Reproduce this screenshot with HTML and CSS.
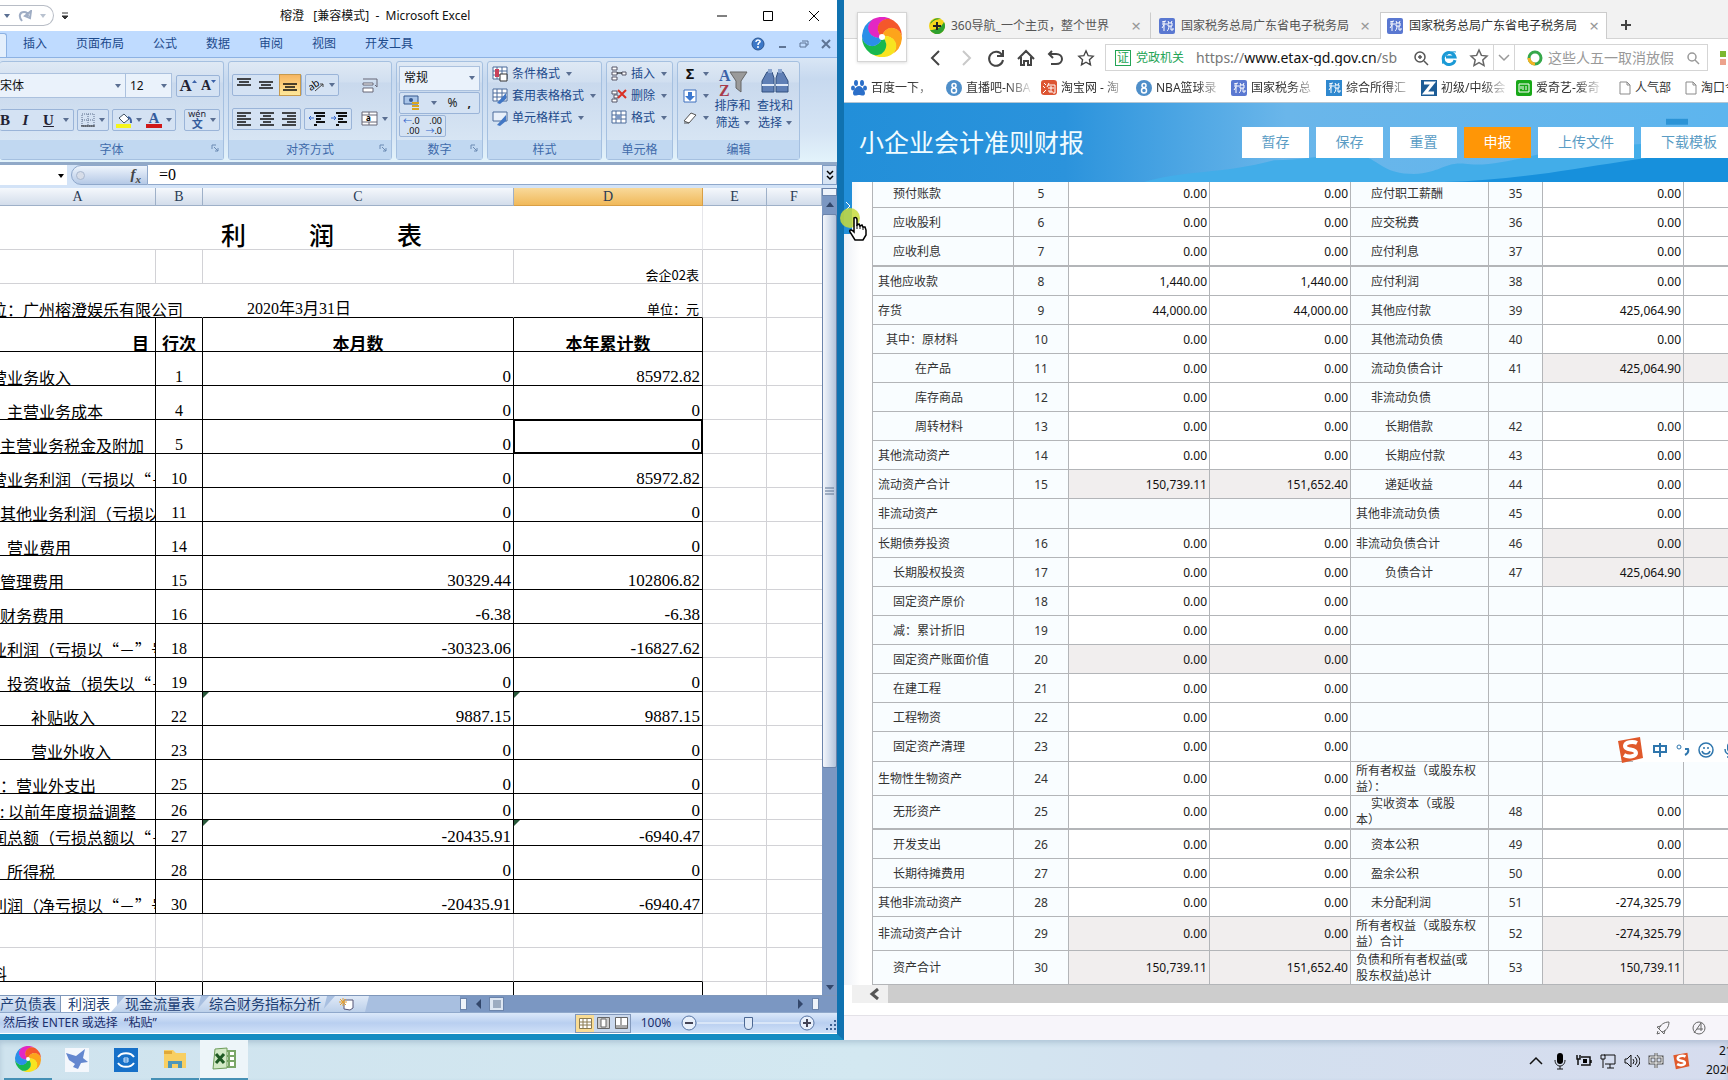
FILE: index.html
```html
<!DOCTYPE html>
<html lang="zh-CN">
<head>
<meta charset="utf-8">
<title>桌面</title>
<link rel="stylesheet" href="styles.css">
</head>
<body>
<svg class="defs" aria-hidden="true">
  <symbol id="dn" viewBox="0 0 6 4"><path d="M0 0h6L3 4z"/></symbol>
  <symbol id="pinwheel" viewBox="0 0 40 40">
    <path d="M20 20A10 10 0 0 1 20 0A20 20 0 0 1 37.300 10A10 10 0 0 0 20 20z" fill="#e327c3" transform="rotate(-25 20 20)"/>
    <path d="M20 20A10 10 0 0 1 20 0A20 20 0 0 1 37.300 10A10 10 0 0 0 20 20z" fill="#f4572b" transform="rotate(35 20 20)"/>
    <path d="M20 20A10 10 0 0 1 20 0A20 20 0 0 1 37.300 10A10 10 0 0 0 20 20z" fill="#fda41b" transform="rotate(95 20 20)"/>
    <path d="M20 20A10 10 0 0 1 20 0A20 20 0 0 1 37.300 10A10 10 0 0 0 20 20z" fill="#f7e420" transform="rotate(155 20 20)"/>
    <path d="M20 20A10 10 0 0 1 20 0A20 20 0 0 1 37.300 10A10 10 0 0 0 20 20z" fill="#19b84e" transform="rotate(215 20 20)"/>
    <path d="M20 20A10 10 0 0 1 20 0A20 20 0 0 1 37.300 10A10 10 0 0 0 20 20z" fill="#2b8fe8" transform="rotate(275 20 20)"/>
    <circle cx="20" cy="20" r="3" fill="#fff"/>
  </symbol>
  <symbol id="tax" viewBox="0 0 16 16"><rect width="16" height="16" rx="2" fill="#5a78d1"/><path d="M3 4l4-1M5 3v10M3 6h5M5 7l-2 3M9 3l1 2M13 3l-1 2M9 5h4v3H9zM10 8c0 3-1 4-2 5M12 8v4h2v-2" fill="none" stroke="#fff"/></symbol>
  <symbol id="eight" viewBox="0 0 16 16"><circle cx="8" cy="8" r="8" fill="#4f8fc9"/><circle cx="8" cy="5.500" r="2" fill="none" stroke="#fff" stroke-width="1.500"/><circle cx="8" cy="10.500" r="2.500" fill="none" stroke="#fff" stroke-width="1.500"/></symbol>
  <symbol id="page" viewBox="0 0 16 16"><path d="M3 2h7l3 3v9H3zM10 2v3h3" fill="#fff" stroke="#8b8b8b"/></symbol>
  <symbol id="star" viewBox="0 0 20 20"><path d="M10 2l2.400 5.400 5.600.6-4.200 3.900 1.200 5.700L10 14.700 5 17.600l1.200-5.700L2 8l5.600-.6z" fill="none" stroke="currentColor" stroke-width="1.500"/></symbol>
  <symbol id="launch" viewBox="0 0 8 8"><path d="M1 5V1h4M3 3l4 4M7 4v3H4" fill="none" stroke="#6b8ab3"/></symbol>
  <symbol id="sogou" viewBox="0 0 28 28"><path d="M2 5L24 1l3 21-21 5z" fill="#e0592b"/><path d="M21 7c-4-2-12-1-12 3 0 5 11 2 11 7 0 3-7 5-12 2" fill="none" stroke="#fff" stroke-width="4"/></symbol>
  <symbol id="grid" viewBox="0 0 16 16"><path d="M1 1h14v12H1z" fill="#fff" stroke="#4a6a9a"/><path d="M1 5h14M1 9h14M5 1v12M10 1v12" stroke="#4a6a9a"/></symbol>
</svg>

<main class="desktop">
<section class="excel">
  <header class="titlebar">
    <div class="quick">
      <svg class="dn"><use href="#dn"/></svg>
      <svg width="14" height="12" viewBox="0 0 14 12"><path d="M4 11C0 6 2 2 6 2c3 0 4 2 4 4M13 1l-1 7-5-2z" fill="none" stroke="#9fadc4" stroke-width="2"/></svg>
      <svg class="dn pale"><use href="#dn"/></svg>
    </div>
    <svg class="more" width="8" height="8" viewBox="0 0 8 8"><path d="M1 1h6M1 4h6L4 7z" stroke="#333" fill="#333"/></svg>
    <h1>榕澄&nbsp;&nbsp; [兼容模式]&nbsp; -&nbsp; Microsoft Excel</h1>
    <div class="winbtns">
      <button aria-label="最小化"><svg width="12" height="12"><path d="M1 6h10" stroke="#000"/></svg></button>
      <button aria-label="最大化"><svg width="12" height="12"><path d="M1.500 1.500h9v9h-9z" fill="none" stroke="#000"/></svg></button>
      <button aria-label="关闭"><svg width="12" height="12"><path d="M1 1l10 10M11 1L1 11" stroke="#000"/></svg></button>
    </div>
  </header>
  <nav class="tabs">
    <span class="active"></span>
    <button>插入</button><button>页面布局</button><button>公式</button><button>数据</button><button>审阅</button><button>视图</button><button>开发工具</button>
    <div class="docbtns">
      <svg width="14" height="14" viewBox="0 0 14 14"><circle cx="7" cy="7" r="6" fill="#3c78c8" stroke="#2b5590"/><path d="M5 5c0-3 5-2 4 0-1 1-2 1-2 3M7 9v2" fill="none" stroke="#fff" stroke-width="1.500"/></svg>
      <svg width="10" height="10"><path d="M2 8h7" stroke="#5f7595" stroke-width="2"/></svg>
      <svg width="10" height="10"><path d="M3 2h6v4H7M1 4h6v4H1z" fill="none" stroke="#5f7595"/></svg>
      <svg width="10" height="10"><path d="M1 1l8 8M9 1L1 9" stroke="#5f7595" stroke-width="2"/></svg>
    </div>
  </nav>

  <div class="ribbon">
    <section class="group g-font">
      <div class="body">
        <div class="line">
          <span class="combo fname">宋体<svg class="dn"><use href="#dn"/></svg></span><span class="combo fsize">12<svg class="dn"><use href="#dn"/></svg></span>
          <div class="set r"><button class="serif big">A</button><svg class="caret" width="5" height="3"><path d="M0 3h5L2.500 0z"/></svg><button class="serif">A</button><svg class="caret" width="5" height="3"><path d="M0 0h5L2.500 3z"/></svg></div>
        </div>
        <div class="line">
          <div class="set biu"><button class="serif"><b>B</b></button><button class="serif"><i>I</i></button><button class="serif"><u>U</u></button><svg class="dn"><use href="#dn"/></svg></div>
          <div class="set"><svg width="14" height="14"><path d="M1 1h12v12H1zM7 1v12M1 7h12" fill="none" stroke="#5d6f8c" stroke-dasharray="1 1"/><path d="M0 13h14" stroke="#222"/></svg><svg class="dn"><use href="#dn"/></svg></div>
          <div class="set two"><svg width="16" height="16"><path d="M3 6l5-4 5 5-5 4z" fill="#fff" stroke="#456"/><path d="M12 5c3 1 3 3 3 6" stroke="#3f62a0" stroke-width="2" fill="none"/><path d="M0 14h15" stroke="#f5f51c" stroke-width="4"/></svg><svg class="dn"><use href="#dn"/></svg><span class="acolor">A</span><svg class="dn"><use href="#dn"/></svg></div>
          <div class="set r"><span class="wen">wén<b>文</b></span><svg class="dn"><use href="#dn"/></svg></div>
        </div>
      </div>
      <h2>字体<svg class="launch"><use href="#launch"/></svg></h2>
    </section>
    <section class="group g-align">
      <div class="body">
        <div class="line">
          <div class="set three"><svg width="16" height="14"><path d="M1 1h14M3 4h10M1 7h14" stroke="#111" stroke-width="1.500"/></svg><svg width="16" height="14"><path d="M1 4h14M3 7h10M1 10h14" stroke="#111" stroke-width="1.500"/></svg><span class="on"><svg width="16" height="14"><path d="M1 6h14M3 9h10M1 12h14" stroke="#111" stroke-width="1.500"/></svg></span></div>
          <div class="set"><svg width="16" height="16"><text x="0" y="11" font-size="10" transform="rotate(-35 6 10)">ab</text><path d="M6 14l8-7m-3 0h3v3" stroke="#444" fill="none"/></svg><svg class="dn"><use href="#dn"/></svg></div>
          <svg class="wrapicon" width="18" height="16"><path d="M1 2h14M1 6h10v2H1zM1 11h10v4H1z" fill="#fff" stroke="#667"/><path d="M15 2v8l-2-2" stroke="#667" fill="none"/></svg>
        </div>
        <div class="line">
          <div class="set three"><svg width="16" height="14"><path d="M1 1h14M1 4h9M1 7h14M1 10h9M1 13h14" stroke="#111" stroke-width="1.500"/></svg><svg width="16" height="14"><path d="M1 1h14M4 4h8M1 7h14M4 10h8M1 13h14" stroke="#111" stroke-width="1.500"/></svg><svg width="16" height="14"><path d="M1 1h14M6 4h9M1 7h14M6 10h9M1 13h14" stroke="#111" stroke-width="1.500"/></svg></div>
          <div class="set"><svg width="18" height="14"><path d="M6 1h11M8 4h9M8 7h5M8 10h9M6 13h3" stroke="#111" stroke-width="2"/><path d="M6 6H1l2-2M1 6l2 2" stroke="#36c" fill="none"/></svg><svg width="18" height="14"><path d="M6 1h11M8 4h9M8 7h5M8 10h9M6 13h3" stroke="#111" stroke-width="2"/><path d="M1 6h5L4 4M6 6L4 8" stroke="#36c" fill="none"/></svg></div>
          <svg class="wrapicon" width="18" height="16"><path d="M1 1h15v13H1zM1 4h15M1 11h15M8 1v3M8 11v3" fill="#fff" stroke="#667"/><text x="5" y="10" font-size="8" font-weight="bold">a</text></svg><svg class="dn"><use href="#dn"/></svg>
        </div>
      </div>
      <h2>对齐方式<svg class="launch"><use href="#launch"/></svg></h2>
    </section>
    <section class="group g-num">
      <div class="body">
        <span class="combo">常规<svg class="dn"><use href="#dn"/></svg></span>
        <div class="set wide"><svg width="18" height="16"><path d="M1 1h14v8H1z" fill="#a8c4e8" stroke="#35588f"/><circle cx="8" cy="5" r="2" fill="#35588f"/><path d="M9 8h7M9 11h7M9 14h7" stroke="#d9a520" stroke-width="2"/></svg><svg class="dn"><use href="#dn"/></svg><span>%</span><b>,</b></div>
        <div class="set dec"><span><i>←</i>.0<br>.00</span><span>.00<br><i>→</i>.0</span></div>
      </div>
      <h2>数字<svg class="launch"><use href="#launch"/></svg></h2>
    </section>
    <section class="group g-style">
      <div class="body cmds">
        <button><svg width="16" height="16"><use href="#grid"/><path d="M3 3h4v8H3z" fill="#c8405a"/><path d="M8 8h7v7H8z" fill="#fff" stroke="#333"/></svg>条件格式<svg class="dn"><use href="#dn"/></svg></button>
        <button><svg width="16" height="16"><use href="#grid"/><path d="M5 15l9-10v6l-6 5z" fill="#4277c4"/></svg>套用表格格式<svg class="dn"><use href="#dn"/></svg></button>
        <button><svg width="16" height="16"><path d="M1 2h14v9H1z" fill="#e8f0fa" stroke="#4a6a9a"/><path d="M5 15l9-10v6l-6 5z" fill="#4277c4"/></svg>单元格样式<svg class="dn"><use href="#dn"/></svg></button>
      </div>
      <h2>样式</h2>
    </section>
    <section class="group g-cells">
      <div class="body cmds">
        <button><svg width="16" height="16"><path d="M1 1h5v3H1zM1 11h5v3H1zM1 6h5v3H1zM11 6h4v3h-4z" fill="#fff" stroke="#556"/><path d="M6 7h5" stroke="#000"/></svg>插入<svg class="dn"><use href="#dn"/></svg></button>
        <button><svg width="16" height="16"><path d="M1 3h5v3H1zM1 11h5v3H1zM3 7h4v3H3z" fill="#fff" stroke="#556"/><path d="M7 2l8 8M15 2L7 10" stroke="#d93025" stroke-width="2"/></svg>删除<svg class="dn"><use href="#dn"/></svg></button>
        <button><svg width="16" height="16"><use href="#grid"/><path d="M5 5h5v4H5z" fill="#7b97c2"/></svg>格式<svg class="dn"><use href="#dn"/></svg></button>
      </div>
      <h2>单元格</h2>
    </section>
    <section class="group g-edit">
      <div class="body row">
        <div class="cmds">
          <button><b class="sum">Σ</b><svg class="dn"><use href="#dn"/></svg></button>
          <button><svg width="14" height="14"><path d="M1 1h12v12H1z" fill="#fff" stroke="#3c6ebd"/><path d="M5 3h4v4h3l-5 5-5-5h3z" fill="#3c78d0"/></svg><svg class="dn"><use href="#dn"/></svg></button>
          <button><svg width="14" height="14"><path d="M1 10l7-8 5 2-7 8zM6 12H1" fill="#fff" stroke="#555"/></svg><svg class="dn"><use href="#dn"/></svg></button>
        </div>
        <button class="large"><svg width="30" height="30"><path d="M12 5h17l-6 9v11l-5-4v-7z" fill="#9a9a9a" stroke="#666"/><text x="1" y="14" font-size="16" fill="#3b62a8" class="az">A</text><text x="1" y="29" font-size="16" fill="#a83a4a" class="az">Z</text></svg>排序和<span>筛选<svg class="dn"><use href="#dn"/></svg></span></button>
        <button class="large"><svg width="30" height="30"><path d="M7 5h5l2 6v14H2V14zM18 5h5l5 9v11H16V11z" fill="#5f7fb5" stroke="#33507f"/><path d="M2 18h12M16 18h12" stroke="#dfe9f7" stroke-width="2"/><path d="M8 2h4v4H8zM18 2h4v4h-4z" fill="#8ba6d0"/></svg>查找和<span>选择<svg class="dn"><use href="#dn"/></svg></span></button>
      </div>
      <h2>编辑</h2>
    </section>
  </div>

  <div class="formula">
    <div class="namebox"><svg class="dn"><use href="#dn"/></svg></div>
    <div class="fx"><span></span><i>f<sub>x</sub></i></div>
    <input aria-label="编辑栏" value="=0">
    <button aria-label="展开编辑栏"><svg width="10" height="12"><path d="M2 2l3 3 3-3M2 7l3 3 3-3" fill="none" stroke="#000" stroke-width="1.500"/></svg></button>
  </div>

  <div class="work">
    <div class="sheetwrap">
    <table class="sheet">
      <colgroup><col class="ca"><col class="cb"><col class="cc"><col class="cd"><col class="ce"><col></colgroup>
      <thead><tr><th>A<th>B<th>C<th class="sel">D<th>E<th>F</tr></thead>
      <tbody>
      <tr class="title"><td colspan="4"><div><span>利</span><span>润</span><span>表</span></div><td><td>
      <tr><td><td><td><td class="note">会企02表<td><td>
      <tr class="pre"><td colspan="2" class="in-9">位：广州榕澄娱乐有限公司<td class="date">2020年3月31日<td class="note">单位：元<td><td>
      <tr class="bx head"><th class="rt">目<th>行次<th>本月数<th>本年累计数<td><td>
      <tr class="bx"><td class="in-9">营业务收入<td>1<td>0<td>85972.82<td><td>
      <tr class="bx"><td class="in7">主营业务成本<td>4<td>0<td>0<td><td>
      <tr class="bx"><td>主营业务税金及附加<td>5<td>0<td class="cursor">0<td><td>
      <tr class="bx"><td class="in-9">营业务利润（亏损以“－”<td>10<td>0<td>85972.82<td><td>
      <tr class="bx"><td>其他业务利润（亏损以“<td>11<td>0<td>0<td><td>
      <tr class="bx"><td class="in7">营业费用<td>14<td>0<td>0<td><td>
      <tr class="bx"><td>管理费用<td>15<td>30329.44<td>102806.82<td><td>
      <tr class="bx"><td>财务费用<td>16<td>-6.38<td>-6.38<td><td>
      <tr class="bx"><td class="in-9">业利润（亏损以“－”号<td>18<td>-30323.06<td>-16827.62<td><td>
      <tr class="bx"><td class="in7">投资收益（损失以“－<td>19<td>0<td>0<td><td>
      <tr class="bx"><td class="in31">补贴收入<td>22<td class="flag">9887.15<td class="flag">9887.15<td><td>
      <tr class="bx"><td class="in31">营业外收入<td>23<td>0<td>0<td><td>
      <tr class="bx"><td>：营业外支出<td>25<td>0<td>0<td><td>
      <tr class="bx low"><td>:&nbsp;以前年度损益调整<td>26<td>0<td>0<td><td>
      <tr class="bx low"><td class="in-9">润总额（亏损总额以“－<td>27<td class="flag">-20435.91<td class="flag">-6940.47<td><td>
      <tr class="bx"><td class="in7">所得税<td>28<td>0<td>0<td><td>
      <tr class="bx"><td class="in-9">利润（净亏损以“－”号<td>30<td>-20435.91<td>-6940.47<td><td>
      <tr><td><td><td><td><td><td>
      <tr class="pre"><td class="in-9">料<td><td><td><td><td>
      <tr class="bx"><td><td><td><td><td><td>
      </tbody>
    </table>
    </div>
    <div class="vbar">
      <span class="split"></span>
      <svg width="15" height="18"><path d="M4 11l4-5 4 5z" fill="#33476b"/></svg>
      <span class="thumb"><svg width="9" height="9"><path d="M0 1h9M0 4h9M0 7h9" stroke="#5d7290"/></svg></span>
      <span class="rest"></span>
      <svg width="15" height="14"><path d="M4 4l4 5 4-5z" fill="#33476b"/></svg>
    </div>
  </div>

  <div class="sheettabs">
    <button>产负债表</button><button class="cur">利润表</button><button>现金流量表</button><button>综合财务指标分析</button>
    <button aria-label="插入工作表"><svg width="16" height="13"><path d="M5 2h9v8l-3 2-6-1z" fill="#fff" stroke="#557"/><path d="M0 4h8M4 0v8M1 1l6 6M7 1L1 7" stroke="#e5a030"/></svg></button>
    <div class="hbar">
      <span class="split"></span><svg width="6" height="10"><path d="M6 0v10L1 5z" fill="#33476b"/></svg>
      <span class="hthumb"><svg width="8" height="8"><path d="M1 0v8M3 0v8M5 0v8M7 0v8" stroke="#5d7290"/></svg></span>
      <svg class="rarrow" width="6" height="10"><path d="M0 0v10l5-5z" fill="#33476b"/></svg><span class="split"></span>
    </div>
  </div>
  <footer class="status">
    <p>然后按 ENTER 或选择&nbsp; “粘贴”</p>
    <div class="views">
      <button class="on" aria-label="普通"><svg width="13" height="11"><path d="M.5.500h12v10H.5zM0 4h13M0 7h13M4 0v11M8 0v11" fill="#fff" stroke="#8a7a50"/></svg></button>
      <button aria-label="页面布局"><svg width="13" height="12"><path d="M.5.500h12v11H.5z" fill="#ccc" stroke="#666"/><path d="M4 2h5v8H4z" fill="#fff" stroke="#666"/></svg></button>
      <button aria-label="分页预览"><svg width="13" height="12"><path d="M.5.500h12v11H.5z" fill="#aaa" stroke="#666"/><path d="M1 1h4v7H1zM7 1h5v7H7z" fill="#fff"/></svg></button>
    </div>
    <span class="pct">100%</span>
    <button class="zoom" aria-label="缩小"><svg width="16" height="16"><circle cx="8" cy="8" r="7" fill="#e8f0fb" stroke="#5674a4"/><path d="M4 8h8" stroke="#445" stroke-width="2"/></svg></button>
    <input type="range" aria-label="显示比例" value="50">
    <button class="zoom" aria-label="放大"><svg width="16" height="16"><circle cx="8" cy="8" r="7" fill="#e8f0fb" stroke="#5674a4"/><path d="M4 8h8M8 4v8" stroke="#445" stroke-width="2"/></svg></button>
    <svg class="grip" width="12" height="12"><path d="M9 1h2M9 5h2M5 5h2M9 9h2M5 9h2M1 9h2" stroke="#3f6293" stroke-width="2"/></svg>
  </footer>
</section>

<section class="browser">
  <svg class="logo" viewBox="-4 -4 48 48"><use href="#pinwheel" width="40" height="40"/></svg>
  <nav class="btabs">
    <div class="btab first"><svg width="16" height="16"><circle cx="8" cy="8" r="8" fill="#f3d51b"/><path d="M1 12A8 8 0 0 0 15 4c-3 6-8 8-14 8zM1 7a8 8 0 0 1 11-6C7 1 3 3 1 7z" fill="#2ea02e"/><path d="M4 8h8M8 4v8" stroke="#222" stroke-width="2"/></svg><span>360导航_一个主页，整个世界</span><button aria-label="关闭标签">×</button></div>
    <div class="btab"><svg width="16" height="16"><use href="#tax"/></svg><span>国家税务总局广东省电子税务局</span><button aria-label="关闭标签">×</button></div>
    <div class="btab open"><svg width="16" height="16"><use href="#tax"/></svg><span>国家税务总局广东省电子税务局</span><button aria-label="关闭标签">×</button></div>
    <button class="plus" aria-label="新标签"><svg width="12" height="12"><path d="M1 6h10M6 1v10" stroke="#444" stroke-width="2"/></svg></button>
  </nav>
  <div class="tools">
    <button aria-label="后退"><svg width="20" height="20"><path d="M13 3l-7 7 7 7" fill="none" stroke="currentColor" stroke-width="2"/></svg></button>
    <button class="off" aria-label="前进"><svg width="20" height="20"><path d="M7 3l7 7-7 7" fill="none" stroke="currentColor" stroke-width="2"/></svg></button>
    <button aria-label="刷新"><svg width="20" height="20"><path d="M16 7a7 7 0 1 0 1 5M17 2v6h-6" fill="none" stroke="currentColor" stroke-width="2"/></svg></button>
    <button aria-label="主页"><svg width="20" height="20"><path d="M2 11l8-8 8 8M5 9v8h3v-4h4v4h3V9" fill="none" stroke="currentColor" stroke-width="2"/></svg></button>
    <button aria-label="恢复"><svg width="20" height="20"><path d="M6 3L3 6l4 4M4 6h6c8 0 8 10 0 10H5" fill="none" stroke="currentColor" stroke-width="2"/></svg></button>
    <button aria-label="收藏"><svg width="18" height="18"><use href="#star"/></svg></button>
    <div class="address">
      <span class="cert"><b>证</b>党政机关</span>
      <span class="url">https://<em>www.etax-gd.gov.cn</em>/sb</span>
      <svg width="16" height="16"><circle cx="7" cy="7" r="5" fill="none" stroke="#555" stroke-width="1.500"/><path d="M11 11l4 4M5 7h4M7 5v4" stroke="#555" stroke-width="1.500"/></svg>
      <svg width="16" height="16"><path d="M14 10A6 6 0 1 1 14 7H5" fill="none" stroke="#1b9ad6" stroke-width="3"/><path d="M2 14C-1 9 9 0 15 2" stroke="#1b9ad6" fill="none"/></svg>
      <svg class="fav" width="20" height="20"><use href="#star"/></svg>
      <span class="chev"><svg width="12" height="8"><path d="M1 1l5 5 5-5" stroke="#999" fill="none" stroke-width="1.500"/></svg></span>
      <label class="search"><svg width="16" height="16"><circle cx="8" cy="8" r="6" fill="none" stroke="#36a84a" stroke-width="3"/><path d="M8 14a6 6 0 0 1-6-6" fill="none" stroke="#f5b323" stroke-width="3"/></svg><input aria-label="搜索" placeholder="这些人五一取消放假"></label>
      <svg width="14" height="14"><circle cx="6" cy="6" r="4" fill="none" stroke="#999" stroke-width="1.500"/><path d="M9 9l4 4" stroke="#999" stroke-width="1.500"/></svg>
    </div>
    <svg class="apps" width="16" height="14"><path d="M0 0h6v6H0z" fill="#7cb82f"/><path d="M8 0h6v6H8z" fill="#e88a3c"/><path d="M0 8h6v6H0z" fill="#eca28c"/><path d="M8 8h6v6H8z" fill="#4c9ce0"/></svg>
  </div>
  <nav class="marks">
    <a href="#"><svg width="16" height="16"><g fill="#2b6fc9"><ellipse cx="5" cy="3" rx="2" ry="3"/><ellipse cx="11" cy="3" rx="2" ry="3"/><ellipse cx="2" cy="8" rx="2" ry="2.500"/><ellipse cx="14" cy="8" rx="2" ry="2.500"/><path d="M8 6c3 0 6 5 6 7 0 4-4 2-6 2s-6 2-6-2c0-2 3-7 6-7z"/></g></svg><span>百度一下，</span></a>
    <a href="#"><svg width="16" height="16"><use href="#eight"/></svg><span>直播吧-NBA</span></a>
    <a href="#"><svg width="16" height="16"><rect width="16" height="15" rx="3" fill="#dd5533"/><path d="M3 3l2 2M2 6l2 2M2 13l3-3M8 3L6 7M7 5h7v8h-2M7 8h6M10 6v6M8 10v2h4" stroke="#fff" fill="none"/></svg><span>淘宝网 - 淘</span></a>
    <a href="#"><svg width="16" height="16"><use href="#eight"/></svg><span>NBA篮球录</span></a>
    <a href="#"><svg width="16" height="16"><use href="#tax"/></svg><span>国家税务总</span></a>
    <a href="#"><svg width="16" height="16"><path d="M0 0h16v16H0z" fill="#2f88cf"/><path d="M3 4l4-1M5 3v10M3 6h5M5 7l-2 3M9 3l1 2M13 3l-1 2M9 5h4v3H9zM10 8c0 3-1 4-2 5M12 8v4h2v-2" fill="none" stroke="#fff"/></svg><span>综合所得汇</span></a>
    <a href="#"><svg width="16" height="16"><path d="M0 0h16v16H0z" fill="#1c5c96"/><path d="M3 3h9L4 13h9" stroke="#fff" stroke-width="3" fill="none"/></svg><span>初级/中级会</span></a>
    <a href="#" class="last"><svg width="16" height="16"><rect width="16" height="16" rx="2" fill="#18a818"/><path d="M3 4h10v8H3zM5 6v3M7 6v4M10 6v4" stroke="#fff" fill="none"/></svg><span>爱奇艺-爱奇</span></a>
    <a href="#" class="short"><svg width="16" height="16"><use href="#page"/></svg><span>人气部</span></a>
    <a href="#" class="short"><svg width="16" height="16"><use href="#page"/></svg><span>淘口令</span></a>
  </nav>

  <header class="banner">
    <svg class="waves" viewBox="0 0 884 80" preserveAspectRatio="none"><path d="M300 80c40-12 80-8 130-22 30 0 60-8 90-4 14 4 20 18 50 18 30-2 30-14 56-10 30 2 60-10 100-16 60-4 110-6 158-12v46z" fill="#42ade9"/><path d="M600 80c100-2 180-26 284-34v34z" fill="#1790dc"/><path d="M822 16h22v6h-22z" fill="#2b93d6"/></svg>
    <h1>小企业会计准则财报</h1>
    <div class="acts"><button>暂存</button><button>保存</button><button>重置</button><button class="go">申报</button><button class="w">上传文件</button><button class="w">下载模板</button></div>
  </header>

  <div class="content">
    <div class="handle"><svg width="6" height="10"><path d="M1 1l4 4-4 4" stroke="#fff" fill="none"/></svg></div>
    <table class="fin">
      <colgroup><col class="c1"><col class="c2"><col class="c3"><col class="c3"><col class="c4"><col class="c5"><col class="c3"><col></colgroup>
      <tbody>
      <tr class="top"><th class="l1">预付账款<th>5<td>0.00<td>0.00<th class="l1">应付职工薪酬<th>35<td>0.00<td>
      <tr><th class="l1">应收股利<th>6<td>0.00<td>0.00<th class="l1">应交税费<th>36<td>0.00<td>
      <tr class="thick"><th class="l1">应收利息<th>7<td>0.00<td>0.00<th class="l1">应付利息<th>37<td>0.00<td>
      <tr><th>其他应收款<th>8<td>1,440.00<td>1,440.00<th class="l1">应付利润<th>38<td>0.00<td>
      <tr><th>存货<th>9<td>44,000.00<td>44,000.00<th class="l1">其他应付款<th>39<td>425,064.90<td>
      <tr><th class="l0">其中：原材料<th>10<td>0.00<td>0.00<th class="l1">其他流动负债<th>40<td>0.00<td>
      <tr><th class="l3">在产品<th>11<td>0.00<td>0.00<th class="l1">流动负债合计<th>41<td class="s">425,064.90<td class="s">
      <tr><th class="l3">库存商品<th>12<td>0.00<td>0.00<th class="l1">非流动负债<th><td class="e"><td class="e">
      <tr><th class="l3">周转材料<th>13<td>0.00<td>0.00<th class="l2">长期借款<th>42<td>0.00<td>
      <tr><th>其他流动资产<th>14<td>0.00<td>0.00<th class="l2">长期应付款<th>43<td>0.00<td>
      <tr><th>流动资产合计<th>15<td class="s">150,739.11<td class="s">151,652.40<th class="l2">递延收益<th>44<td>0.00<td>
      <tr class="mid"><th>非流动资产<th><td class="e"><td class="e"><th>其他非流动负债<th>45<td>0.00<td>
      <tr><th>长期债券投资<th>16<td>0.00<td>0.00<th>非流动负债合计<th>46<td class="s">0.00<td class="s">
      <tr><th class="l1">长期股权投资<th>17<td>0.00<td>0.00<th class="l2">负债合计<th>47<td class="s">425,064.90<td class="s">
      <tr><th class="l1">固定资产原价<th>18<td>0.00<td>0.00<th><th><td class="e"><td class="e">
      <tr><th class="l1">减：累计折旧<th>19<td>0.00<td>0.00<th><th><td class="e"><td class="e">
      <tr><th class="l1">固定资产账面价值<th>20<td class="s">0.00<td class="s">0.00<th><th><td class="e"><td class="e">
      <tr><th class="l1">在建工程<th>21<td>0.00<td>0.00<th><th><td class="e"><td class="e">
      <tr><th class="l1">工程物资<th>22<td>0.00<td>0.00<th><th><td class="e"><td class="e">
      <tr class="mid"><th class="l1">固定资产清理<th>23<td>0.00<td>0.00<th><th><td class="e"><td class="e">
      <tr class="tall"><th>生物性生物资产<th>24<td>0.00<td>0.00<th>所有者权益（或股东权<br>益）：<th><td class="e"><td class="e">
      <tr class="tall thick"><th class="l1">无形资产<th>25<td>0.00<td>0.00<th><span class="ind">实收资本（或股</span><br>本）<th>48<td>0.00<td>
      <tr><th class="l1">开发支出<th>26<td>0.00<td>0.00<th class="l1">资本公积<th>49<td>0.00<td>
      <tr><th class="l1">长期待摊费用<th>27<td>0.00<td>0.00<th class="l1">盈余公积<th>50<td>0.00<td>
      <tr><th>其他非流动资产<th>28<td>0.00<td>0.00<th class="l1">未分配利润<th>51<td>-274,325.79<td>
      <tr class="tall"><th>非流动资产合计<th>29<td class="s">0.00<td class="s">0.00<th>所有者权益（或股东权<br>益）合计<th>52<td class="s">-274,325.79<td class="s">
      <tr class="tall"><th class="l1">资产合计<th>30<td class="s">150,739.11<td class="s">151,652.40<th>负债和所有者权益(或<br>股东权益)总计<th>53<td class="s">150,739.11<td class="s">
      </tbody>
    </table>
  </div>
  <div class="hscroll"><span><svg width="10" height="12"><path d="M9 1L3 6l6 5" fill="none" stroke="#555" stroke-width="3"/></svg></span></div>
  <footer class="bfoot">
    <svg width="14" height="14"><path d="M3 8C4 4 8 1 13 1c0 5-3 9-7 10zM3 8L1 6l4-1M6 11l2 2 1-4M2 10l-1 3 3-1" fill="none" stroke="#666"/></svg>
    <svg width="14" height="14"><circle cx="7" cy="7" r="6" fill="none" stroke="#666"/><path d="M2 12L9 2v8M5 8h6" fill="none" stroke="#666"/></svg>
  </footer>
</section>
</main>

<footer class="taskbar">
  <button class="run" aria-label="浏览器"><svg width="26" height="26"><use href="#pinwheel"/></svg></button>
  <button aria-label="迅雷"><svg width="24" height="24"><path d="M0 0h24v24H0z" fill="#f4f7fc"/><path d="M1 5l10 3 9-7-2 9 5 4-7 1-3 6-5-2 2-3-6-4z" fill="#6487cf"/></svg></button>
  <button aria-label="税务"><svg width="24" height="24"><path d="M0 0h24v24H0z" fill="#1670c8"/><path d="M4 9a9 7 0 0 1 16 0M4 15a9 7 0 0 0 16 0" stroke="#fff" stroke-width="2" fill="none"/><path d="M10 10h4v4h-4zM10 12h4" stroke="#cfe6ff" fill="none"/></svg></button>
  <button class="run files" aria-label="文件"><svg width="24" height="24"><path d="M1 3h9l3 3h10v15H1z" fill="#f8cf62"/><path d="M1 4h8v3H1z" fill="#e0a93a"/><path d="M5 21v-7h14v7h-4v-4h-6v4z" fill="#4d96b8"/></svg></button>
  <button class="run cur" aria-label="Excel"><svg width="24" height="24"><path d="M12 4h11v16H12M12 9h11M12 14h11M17 4v16" fill="#fff" stroke="#79a667" stroke-width="2"/><path d="M3 2l12-1v20L1 22z" fill="#d3eac6" stroke="#6c9c59"/><path d="M4 7l8 9M12 7l-8 9" stroke="#1f5a24" stroke-width="3"/></svg></button>
  <div class="tray">
    <svg width="16" height="20"><path d="M2 13l6-6 6 6" stroke="#111" fill="none" stroke-width="1.500"/></svg>
    <svg width="16" height="20"><rect x="5" y="2" width="6" height="11" rx="3"/><path d="M3 9c0 8 10 8 10 0M8 15v3M5 18h6" stroke="#111" fill="none"/></svg>
    <svg width="16" height="20"><path d="M5 6h9v8H5M15 9v3M1 4v4h3V4M2 8v6" stroke="#111" fill="none" stroke-width="1.500"/><path d="M7 8h4v4H7z"/></svg>
    <svg width="16" height="20"><path d="M4 4h11v9H5M7 17h7M10 13v4M1 4h4v4H1zM3 8v9" stroke="#111" fill="none"/></svg>
    <svg width="16" height="20"><path d="M1 8h2l4-4v12l-4-4H1zM9 8q2 2 0 5M11 6q4 4 0 8M13 4q6 6 0 12" stroke="#111" fill="none"/></svg>
    <svg width="16" height="20"><path d="M2 6h12v6H2zM8 2v15" stroke="#555" stroke-width="3" fill="none"/><path d="M2 6h12v6H2zM8 2v15" stroke="#fff" fill="none"/></svg>
    <svg width="18" height="18"><use href="#sogou"/></svg>
  </div>
  <div class="clock"><span class="time">21</span><span>2020</span></div>
</footer>

<div class="ime"><svg width="28" height="28"><use href="#sogou"/></svg>
  <svg width="16" height="16"><path d="M2 4h12v6H2zM8 1v14" stroke="#2f76ad" stroke-width="2" fill="none"/></svg>
  <svg width="14" height="14"><circle cx="3" cy="4" r="2" stroke="#2f76ad" fill="none"/><path d="M9 6h3c1 3-1 5-3 6" stroke="#2f76ad" stroke-width="2" fill="none"/></svg>
  <svg width="16" height="16"><circle cx="8" cy="8" r="7" stroke="#2f76ad" stroke-width="1.500" fill="none"/><path d="M6 5v2M10 5v2M4 9c1 4 7 4 8 0" stroke="#2f76ad" stroke-width="1.500" fill="none"/></svg>
  <svg width="16" height="16"><rect x="5" y="1" width="6" height="9" rx="3" fill="#2f76ad"/><path d="M3 7c0 7 10 7 10 0M8 12v3M5 15h6" stroke="#2f76ad" stroke-width="1.500" fill="none"/></svg>
</div>
<svg class="pointer" width="30" height="38" viewBox="0 0 30 38"><circle cx="10" cy="12" r="10" fill="#c8dc3c" opacity=".85"/><path d="M14 12c2-1 3 0 3 2v5l2-1 1 2 2-1 1 2 2 0 1 3v5l-3 5h-8l-5-8c-1-2 1-3 3-1l1 1z" fill="#fff" stroke="#000" stroke-width="1.500"/><path d="M17 19v4M20 20v3M23 21v3" stroke="#000"/></svg>
</body>
</html>
```
FILE: styles.css
```css
* { box-sizing: border-box; margin: 0; padding: 0; }
body { height: 100vh; overflow: hidden; display: grid; grid-template-rows: 1fr 40px; font: 12px/16px "Noto Sans", "Noto Sans CJK SC", sans-serif; color: #222; background: #1072b0; }
button, input { font: inherit; color: inherit; background: none; border: 0; }
svg { display: block; flex: none; }
a { color: inherit; text-decoration: none; }
.defs { position: absolute; width: 0; height: 0; }
.dn { width: 6px; height: 4px; fill: #5a6f92; }
.dn.pale { fill: #b9c2d0; }
.desktop { display: grid; grid-template-columns: 844fr 884fr; min-height: 0; }

/* spreadsheet window */
.excel { display: flex; flex-direction: column; min-width: 0; min-height: 0; border-right: 7px solid #1072b0; border-bottom: 6px solid #158cc2; background: #d3e3f7; }
.titlebar { display: flex; align-items: center; height: 31px; background: #fff; }
.quick { display: flex; align-items: center; gap: 10px; width: 54px; height: 21px; padding-left: 4px; border: 1px solid #b8bdc6; border-left: 0; border-radius: 0 11px 11px 0; }
.quick svg + svg { margin-left: -2px; }
.more { margin-left: 7px; }
.titlebar h1 { flex: 1; margin-left: 211px; font-size: 12px; font-weight: 400; color: #111; white-space: nowrap; }
.winbtns { display: flex; }
.winbtns button { width: 46px; height: 28px; display: grid; place-items: center; }
.tabs { display: flex; align-items: center; gap: 29px; height: 26px; background: #bfdbff; color: #1d4a8c; }
.tabs .active { align-self: flex-end; width: 7px; height: 24px; margin-right: -13px; background: #e4effc; border: 1px solid #8db2e3; border-width: 1px 1px 0 0; border-radius: 0 3px 0 0; }
.docbtns { display: flex; align-items: center; gap: 12px; margin-left: auto; padding-right: 6px; }
.ribbon { display: flex; gap: 4px; height: 108px; padding: 3px 0 2px; background: linear-gradient(#d9e6f5, #c7d9ef 20%, #d5e4f4 70%, #e3f3fb); border-top: 1px solid #8db2e3; border-bottom: 3px solid #91a9c8; }
.group { display: flex; flex-direction: column; border: 1px solid #a5c0e0; border-radius: 3px; background: linear-gradient(#dfe9f4, #d1dff0 20%, #c9d9ed 22%, #dce9f6); }
.group .body { flex: 1; display: flex; flex-direction: column; justify-content: space-around; padding: 6px 3px 4px; }
.group h2 { position: relative; height: 19px; background: #c1d8f1; font-size: 12px; line-height: 19px; font-weight: 400; text-align: center; color: #3e6aaa; }
.launch { position: absolute; right: 4px; top: 4px; width: 8px; height: 8px; }
.g-font { width: 224px; border-left: 0; } .g-align { width: 164px; } .g-num { width: 87px; } .g-style { width: 115px; } .g-cells { width: 67px; } .g-edit { width: 123px; }
.group.g-font .body { padding-left: 0; }
.line { display: flex; align-items: center; gap: 3px; }
.line .r { margin-left: auto; }
.combo { display: flex; align-items: center; justify-content: space-between; height: 25px; padding: 0 4px; background: #eaf2fb; border: 1px solid #abc1de; color: #111; }
.fname { width: 126px; border-left: 0; padding-left: 0; margin-right: -4px; } .fsize { width: 47px; }
.set { display: flex; align-items: center; gap: 4px; height: 22px; padding: 0 3px; border: 1px solid #9ab4d8; border-radius: 2px; background: #d4e2f3; }
.serif { font: bold 14px/20px "Liberation Serif", serif; color: #223; }
.big { font-size: 17px; }
.caret { align-self: flex-start; margin: 4px 0 0 -4px; fill: #3b62a8; }
.biu { width: 74px; border-left: 0; padding: 0 4px 0 0; gap: 0; }
.biu .serif { width: 23px; text-align: center; font-size: 15px; }
.biu .serif:first-child { width: 14px; text-align: left; }
.biu .dn { margin-left: auto; }
.acolor { width: 16px; height: 16px; border-bottom: 4px solid #d01818; font: bold 15px/12px "Liberation Serif", serif; color: #345c9c; text-align: center; }
.wen { display: flex; flex-direction: column; font-size: 9px; line-height: 8px; color: #223; text-align: center; }
.wen b { font-size: 11px; line-height: 12px; color: #345c9c; }
.three { width: 70px; justify-content: space-between; padding: 0 0 0 3px; }
.three > svg:last-child { margin-right: 3px; }
.three .on { display: grid; place-items: center; width: 22px; height: 22px; background: linear-gradient(#f5b562, #ffd582 60%, #fce89a); border: 1px solid #c79a4d; }
.wrapicon { margin-left: 6px; }
.g-align .line:first-child .wrapicon { margin-left: 20px; }
.group.g-num .body { padding: 3px 2px; }
.wide { justify-content: space-between; padding-right: 8px; color: #222; }
.dec { width: 47px; justify-content: space-between; }
.dec span { font-size: 9px; line-height: 10px; color: #111; text-align: right; } .dec i { font-style: normal; color: #36c; }
.cmds { align-items: flex-start; }
.cmds button { display: flex; align-items: center; gap: 4px; height: 22px; color: #1d4a8c; white-space: nowrap; }
.cmds .dn { margin-left: 2px; }
.group .cmds.body { justify-content: flex-start; padding: 1px 4px; }
.group .row { flex-direction: row; justify-content: space-between; padding: 1px 5px; }
.sum { width: 14px; font-size: 14px; color: #111; text-align: center; }
.large { display: flex; flex-direction: column; align-items: center; width: 38px; padding-top: 4px; color: #1d4a8c; line-height: 17px; white-space: nowrap; }
.large span { display: flex; align-items: center; gap: 4px; }
.az { font-family: "Liberation Serif", serif; font-weight: bold; }

.formula { display: flex; align-items: center; height: 23px; padding-bottom: 3px; background: #d3e3f7; }
.formula > * { height: 20px; }
.namebox { width: 67px; padding: 9px 3px; background: #fff; } .namebox .dn { margin-left: auto; fill: #000; }
.fx { display: flex; justify-content: space-between; align-items: center; width: 77px; margin: 0 0 0 4px; padding: 0 6px 0 4px; border: 1px solid #8fa8cb; border-radius: 10px 0 0 10px; background: linear-gradient(#eef4fc, #b5c9e6); font: bold 15px/18px "Liberation Serif", serif; color: #444; }
.fx span { width: 9px; height: 9px; border-radius: 5px; background: #d7dde8; border: 1px solid #a9b8cf; } .fx sub { font-size: 11px; line-height: 1; }
.formula input { flex: 1; min-width: 0; padding-left: 11px; background: #fff; font: 16px/18px "Liberation Serif", serif; color: #000; border-bottom: 1px solid #8fa8cb; }
.formula button { width: 15px; display: grid; place-items: center; border: 1px solid #7f9cc4; background: #d7e4f4; }

.work { flex: 1; display: flex; min-height: 0; }
.sheetwrap { flex: 1; min-width: 0; overflow: hidden; background: #fff; }
.sheet { width: 100%; table-layout: fixed; border-collapse: separate; border-spacing: 0; font: 17px/16px "Liberation Serif", "Noto Sans CJK SC", serif; color: #000; }
.ca { width: 156px; } .cb { width: 47px; } .cc { width: 311px; } .cd { width: 189px; } .ce { width: 64px; }
.sheet thead th { height: 18px; padding-top: 1px; font-size: 14px; font-weight: 400; line-height: 16px; color: #2a3b55; background: linear-gradient(#f5f8fc, #d3ddeb); border: 1px solid #9eb0c8; border-width: 0 1px 1px 0; }
.sheet thead .sel { background: linear-gradient(#f9d99a, #f0b95a); border-color: #d99f45; }
.sheet tbody tr { height: 34px; }
.sheet tbody .low { height: 26px; }
.sheet tbody .title { height: 44px; }
.sheet tbody td, .sheet tbody th { position: relative; overflow: hidden; vertical-align: bottom; white-space: nowrap; border: 1px solid #d2d2d6; border-width: 0 1px 1px 0; }
.sheet td:last-child { border-right: 0; }
.title div { display: flex; gap: 63px; padding: 0 0 2px 221px; font: 500 25px/26px "Noto Sans CJK SC", sans-serif; }
.sheet .title td:first-child { border-right-color: #e6e6ea; }
.sheet .pre td:nth-last-child(n+3) { border-bottom-color: #000; }
.sheet td.in-9, .sheet .bx td:first-child, .sheet .note, .sheet .date { font-family: "Noto Sans CJK SC", sans-serif; font-size: 16px; }
.sheet .date { font-family: "Liberation Serif", "Noto Sans CJK SC", serif; padding-left: 44px; }
.sheet .pre td[colspan], .sheet .pre .date { border-right-color: #fff; }
.sheet .note { font-size: 13px; text-align: right; padding: 0 3px 0 0; }
.sheet .bx td:nth-child(-n+4), .sheet .bx th { border-color: #000; }
.sheet .bx td:nth-child(2) { font-size: 16px; text-align: center; }
.sheet .bx td:nth-child(3), .sheet .bx td:nth-child(4) { text-align: right; padding-right: 2px; }
.sheet .bx th { font-family: "Noto Sans CJK SC", sans-serif; font-size: 17px; }
.sheet .bx .rt { text-align: right; padding-right: 6px; }
.sheet .in-9 { text-indent: -9px; } .sheet .in7 { text-indent: 7px; } .sheet .in31 { text-indent: 31px; }
.flag::before { content: ""; position: absolute; left: 0; top: 0; border: 3px solid; border-color: #28583a transparent transparent #28583a; }
.sheet .bx td.cursor { box-shadow: inset 0 0 0 1px #000; }
.vbar { display: flex; flex-direction: column; width: 15px; background: #7b97c2; }
.split { width: 7px; height: 12px; background: #eef3fa; border: 1px solid #6b84ab; }
.vbar .split { width: 15px; height: 8px; }
.thumb { flex: 555; display: grid; place-items: center; background: linear-gradient(90deg, #f3f6fb, #cdd9ea 60%, #b3c3da); border: 1px solid #6b84ab; border-radius: 2px; }
.rest { flex: 214; }

.sheettabs { display: flex; height: 17px; background: #a8bfe0; border-top: 1px solid #7f97ba; color: #1d3f75; }
.sheettabs button { padding: 0 6px 0 14px; margin-right: -6px; font-size: 14px; line-height: 14px; white-space: nowrap; background: linear-gradient(#dfe9f7, #bcd0ea); clip-path: polygon(0 100%, 14px 0, 100% 0, calc(100% - 4px) 100%); }
.sheettabs button:first-child { padding: 0 4px 0 0; margin-right: 0; clip-path: none; border-right: 1px solid #7f97ba; }
.sheettabs .cur { padding: 0 7px; background: #fff; clip-path: none; }
.sheettabs button:nth-child(5) { width: 48px; padding-left: 18px; }
.hbar { display: flex; align-items: center; gap: 8px; width: 45%; margin-left: auto; padding-right: 18px; background: #7b97c2; }
.hthumb { display: grid; place-items: center; width: 15px; height: 14px; background: #dde6f2; border: 1px solid #6b84ab; }
.rarrow { margin-left: auto; }
.status { display: flex; align-items: center; height: 22px; border-top: 1px solid #8fa8cb; border-bottom: 1px solid #fff; background: linear-gradient(#dbe8fa, #b9cff0 50%, #cfe0f8); color: #1b2f6b; }
.status p { flex: 1; padding-left: 3px; }
.views { display: flex; border: 1px solid #8298ba; background: #cad9ee; }
.views button { width: 18px; height: 17px; display: grid; place-items: center; }
.views .on { background: #f9dc94; }
.pct { width: 50px; text-align: center; }
.status input { appearance: none; width: 102px; height: 16px; background: linear-gradient(#d9e6f8, #d9e6f8) center/100% 2px no-repeat; }
.status input::-webkit-slider-thumb { appearance: none; width: 9px; height: 13px; background: #dfe9f7; border: 1px solid #4c6893; border-radius: 1px 1px 5px 5px; }
.grip { margin: 6px 0 0 10px; }

/* browser window */
.browser { position: relative; display: flex; flex-direction: column; min-width: 0; min-height: 0; overflow: hidden; background: #fff; }
.logo { position: absolute; left: 13px; top: 12px; width: 50px; height: 50px; background: #fff; border: 1px solid #d5d5d5; box-shadow: 0 1px 3px #0002; z-index: 1; }
.btabs { display: flex; align-items: flex-end; height: 39px; padding-left: 76px; background: #f2f2f2; box-shadow: inset 0 -1px #d4d4d4; }
.btab { display: flex; align-items: center; gap: 6px; width: 229px; height: 27px; padding: 0 8px 0 7px; color: #555; border: 1px solid transparent; border-bottom: 0; white-space: nowrap; }
.btab span { flex: 1; overflow: hidden; }
.btab button { width: 12px; font-size: 17px; color: #999; }
.btab.first { width: 231px; padding-left: 8px; border-right-color: #ccc; }
.btab.open { width: 227px; padding: 0 6px; background: #fff; border-color: #ccc; color: #333; }
.plus { padding: 8px 13px; }
.tools { display: flex; align-items: center; height: 37px; padding-left: 77px; color: #444; }
.tools > button { width: 30px; height: 24px; display: grid; place-items: center; }
.tools .off { color: #c9c9c9; }
.address { flex: 1; display: flex; align-items: center; height: 27px; border: 1px solid #d5d5d5; margin: 0 12px 0 4px; padding: 0 7px 0 9px; gap: 12px; min-width: 0; }
.cert { display: flex; align-items: center; gap: 5px; color: #23a455; white-space: nowrap; }
.cert b { width: 16px; height: 16px; border: 1px solid #23a455; line-height: 14px; font-weight: 400; text-align: center; }
.url { flex: 1; font-size: 14px; color: #777; white-space: nowrap; overflow: hidden; } .url em { font-style: normal; color: #111; }
.fav { color: #666; margin-right: -8px; }
.chev { display: grid; place-items: center; width: 22px; height: 25px; border: 1px solid #d5d5d5; border-width: 0 1px; }
.search { display: flex; align-items: center; gap: 5px; }
.search input { width: 126px; font-size: 14px; } .search input::placeholder { color: #999; opacity: 1; }
.apps { margin-right: -8px; }
.marks { display: flex; align-items: center; height: 26px; padding: 0 0 3px 7px; color: #333; }
.marks a { display: flex; align-items: center; gap: 4px; flex: none; width: 95px; white-space: nowrap; }
.marks span { width: 68px; overflow: hidden; mask-image: linear-gradient(90deg, #000 60%, transparent); }
.marks .last { width: 101px; }
.marks .short { width: 66px; gap: 2px; } .marks .short span { width: 40px; mask-image: none; }
.banner { position: relative; display: flex; align-items: center; height: 80px; padding: 0 0 1px 15px; border-top: 1px solid #b5c6d3; background: linear-gradient(90deg, #228fd9, #2b93dc 25%, #6ab6ea 50%, #5db5ee); }
.waves { position: absolute; inset: 0; width: 100%; height: 100%; }
.banner h1 { position: relative; font-size: 25px; line-height: 30px; font-weight: 400; color: #f0fcff; white-space: nowrap; }
.acts { position: relative; display: flex; gap: 7px; margin-left: 158px; }
.acts button { flex: none; width: 67px; height: 31px; background: #fff; color: #5a9cc4; font-size: 14px; }
.acts .go { background: #ff9606; color: #fff; }
.acts .w { width: 96px; }
.content { position: relative; flex: 1; min-height: 0; overflow: hidden; padding-left: 28px; background: linear-gradient(90deg, #eef1f6, #fff 16px); }
.handle { position: absolute; left: 0; top: 0; width: 8px; height: 52px; padding: 19px 0 0 1px; background: #228fd9; }
.fin { width: 100%; table-layout: fixed; border-collapse: separate; border-spacing: 0; border-left: 1px solid #b3b5b8; }
.c1 { width: 141px; } .c2 { width: 55px; } .c3 { width: 141px; } .c4 { width: 138px; } .c5 { width: 54px; }
.fin tr { height: 29px; } .fin .top { height: 26px; } .fin .mid, .fin .thick { height: 30px; } .fin .tall { height: 34px; }
.fin td, .fin th { border: 1px solid #b3b5b8; border-width: 0 1px 1px 0; font-weight: 400; white-space: nowrap; padding-top: 1px; }
.fin .top > * { padding-top: 0; padding-bottom: 1px; }
.fin .tall > * { padding-top: 0; }
.fin .thick td, .fin .thick th { border-bottom-width: 2px; }
.fin th { background: #f9fdff; text-align: center; color: #333; }
.fin th:nth-child(4n+1) { text-align: left; padding-left: 5px; }
.fin th:nth-child(4n+1).l0 { padding-left: 13px; } .fin th:nth-child(4n+1).l1 { padding-left: 20px; } .fin th:nth-child(4n+1).l2 { padding-left: 34px; } .fin th:nth-child(4n+1).l3 { padding-left: 42px; }
.ind { padding-left: 15px; }
.fin td { text-align: right; padding-right: 2px; color: #111; background: #fff; }
.fin td:last-child { border-right: 0; }
.fin .s { background: #f1eeee; } .fin .e { background: #f9fdff; }
.hscroll { height: 18px; margin-left: 8px; background: #cdcdcd; }
.hscroll span { display: flex; align-items: center; width: 36px; height: 18px; padding-left: 17px; background: #f0f0f0; }
.bfoot { display: flex; justify-content: flex-end; align-items: center; gap: 22px; height: 25px; margin-top: 12px; padding-right: 22px; background: #f7f5fa; border-top: 1px solid #e4e2e8; }

.taskbar { display: flex; padding-left: 4px; overflow: hidden; background: linear-gradient(90deg, #cfe3ee, #d3e8f1 50%, #d3e0ef 70%, #d6dcee); box-shadow: inset 0 3px 5px #5a7d9a44; }
.taskbar button { width: 48px; height: 40px; margin-right: 1px; display: grid; place-items: center; }
.taskbar .run { border-bottom: 2px solid #4590b5; }
.taskbar .cur { background: #edf5f9; }
.tray { display: flex; align-items: center; gap: 8px; margin-left: auto; padding-top: 2px; }
.clock { display: flex; flex-direction: column; justify-content: center; gap: 3px; width: 38px; padding-left: 16px; font-size: 12px; color: #111; }
.time { padding-left: 13px; }

.ime { position: absolute; right: -10px; top: 736px; display: flex; align-items: center; gap: 8px; height: 28px; background: linear-gradient(#fff, #fff) right 4px/86% 22px no-repeat; }
.pointer { position: absolute; left: 840px; top: 206px; }
```
